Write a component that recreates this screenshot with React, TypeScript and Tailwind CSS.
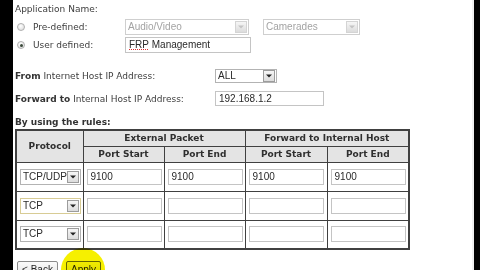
import React from "react";

const label = "font-['DejaVu_Sans',Verdana,sans-serif] text-[9px] leading-[12px] text-[#3d3d3d]";
const field = "font-['Liberation_Sans',Arial,sans-serif] text-[10px] leading-none";

function Arrow({ disabled = false }: { disabled?: boolean }) {
  return (
    <span
      className={`mr-px flex h-[12px] w-[12px] shrink-0 items-center justify-center border bg-[linear-gradient(#f6f6f6,#dcdcdc)] ${
        disabled ? "border-[#d4d4d4]" : "border-[#9c9c9c]"
      }`}
    >
      <svg width="6" height="4" viewBox="0 0 6 4">
        <path d="M0 0.5h6L3 3.5z" fill={disabled ? "#c4c4c4" : "#222"} />
      </svg>
    </span>
  );
}

function Select({
  value,
  className,
  disabled = false,
  warm = false,
}: {
  value: string;
  className: string;
  disabled?: boolean;
  warm?: boolean;
}) {
  const border = warm ? "border-[#d8cc95]" : disabled ? "border-[#cfcfcf]" : "border-[#b3b3b3]";
  return (
    <div className={`flex items-center border bg-white ${border} ${className}`}>
      <span
        className={`flex-1 overflow-hidden whitespace-nowrap pl-[2px] ${field} ${
          disabled ? "text-[#a3a3a3]" : "text-[#2a2a2a]"
        }`}
      >
        {value}
      </span>
      <Arrow disabled={disabled} />
    </div>
  );
}

function Input({ children, className }: { children?: React.ReactNode; className: string }) {
  return (
    <div className={`flex items-center whitespace-nowrap border border-[#c4c4c4] bg-white pl-[3px] ${field} text-[#2a2a2a] ${className}`}>
      {children}
    </div>
  );
}

function Radio({ checked = false }: { checked?: boolean }) {
  return (
    <span className="flex h-[8px] w-[8px] items-center justify-center rounded-full border border-[#b0b0b0] bg-[radial-gradient(circle_at_40%_35%,#ffffff,#d8d8d8)]">
      {checked && <span className="h-[3px] w-[3px] rounded-full bg-[#3b4a3b]" />}
    </span>
  );
}

const rules = [
  { proto: "TCP/UDP", a: "9100", b: "9100", c: "9100", d: "9100", warm: false },
  { proto: "TCP", a: "", b: "", c: "", d: "", warm: true },
  { proto: "TCP", a: "", b: "", c: "", d: "", warm: false },
];

const th =
  "border border-[#404040] bg-[#e4e4e4] p-0 text-center font-['DejaVu_Sans',Verdana,sans-serif] text-[9px] font-bold leading-[12px] text-[#2f2f2f]";
const td = "border border-[#404040] p-0";

export default function App() {
  return (
    <div className="flex h-[270px] w-[480px] overflow-hidden bg-black">
      <div className="w-[13px] shrink-0 bg-black" />
      <div className="relative flex flex-1 flex-col bg-white pl-[2px]">
        <div className={`mt-[3px] ${label}`}>Application Name:</div>

        <div className="mt-[4px] flex h-[16px] items-center">
          <span className="ml-[2px] w-[16px]">
            <Radio />
          </span>
          <span className={`w-[92px] ${label}`}>Pre-defined:</span>
          <Select value="Audio/Video" disabled className="h-[16px] w-[124px]" />
          <Select value="Camerades" disabled className="ml-[14px] h-[16px] w-[97px]" />
        </div>

        <div className="mt-[2px] flex h-[16px] items-center">
          <span className="ml-[2px] w-[16px]">
            <Radio checked />
          </span>
          <span className={`w-[92px] ${label}`}>User defined:</span>
          <Input className="h-[16px] w-[126px]">
            <span className="underline decoration-[#e03030] decoration-dotted underline-offset-[1px]">FRP</span>
            &nbsp;Management
          </Input>
        </div>

        <div className="mt-[16px] flex h-[14px] items-center">
          <span className={`w-[200px] ${label}`}>
            <b className="text-[#333]">From</b> Internet Host IP Address:
          </span>
          <Select value="ALL" className="h-[14px] w-[62px]" />
        </div>

        <div className="mt-[8px] flex h-[15px] items-center">
          <span className={`w-[200px] ${label}`}>
            <b className="text-[#333]">Forward to</b> Internal Host IP Address:
          </span>
          <Input className="h-[15px] w-[109px]">192.168.1.2</Input>
        </div>

        <div className={`mt-[10px] font-bold ${label} text-[#333]`}>By using the rules:</div>

        <table className="mt-px w-[393px] table-fixed border-collapse border-2 border-[#404040]">
          <colgroup>
            <col className="w-[67px]" />
            <col className="w-[81px]" />
            <col className="w-[81px]" />
            <col className="w-[82px]" />
            <col className="w-[82px]" />
          </colgroup>
          <thead>
            <tr className="h-[16px]">
              <th rowSpan={2} className={th}>
                Protocol
              </th>
              <th colSpan={2} className={th}>
                External Packet
              </th>
              <th colSpan={2} className={th}>
                Forward to Internal Host
              </th>
            </tr>
            <tr className="h-[16px]">
              <th className={th}>Port Start</th>
              <th className={th}>Port End</th>
              <th className={th}>Port Start</th>
              <th className={th}>Port End</th>
            </tr>
          </thead>
          <tbody>
            {rules.map((r, i) => (
              <tr key={i} className="h-[29px]">
                <td className={td}>
                  <Select value={r.proto} warm={r.warm} className="ml-[3px] h-[16px] w-[61px]" />
                </td>
                {[r.a, r.b, r.c, r.d].map((v, j) => (
                  <td key={j} className={td}>
                    <Input className="ml-[3px] h-[16px] w-[75px]">{v}</Input>
                  </td>
                ))}
              </tr>
            ))}
          </tbody>
        </table>

        <div className="mt-[11px] flex gap-[8px] pl-[2px]">
          <button
            className={`h-[18px] w-[41px] rounded-[2px] border border-[#8a8a8a] bg-[linear-gradient(#fafafa,#e2e2e2)] ${field} text-[#222]`}
          >
            &lt; Back
          </button>
          <button
            className={`h-[18px] w-[35px] rounded-[2px] border border-[#6a6a6a] bg-[linear-gradient(#fafafa,#e2e2e2)] ${field} text-[#222]`}
          >
            Apply
          </button>
        </div>

        <div className="pointer-events-none absolute left-[48px] top-[248px] h-[44px] w-[44px] rounded-full bg-[#f6f000] mix-blend-multiply blur-[0.5px]" />
      </div>
      <div className="w-[2px] shrink-0 bg-[#efefef]" />
      <div className="w-[6px] shrink-0 bg-black" />
    </div>
  );
}
